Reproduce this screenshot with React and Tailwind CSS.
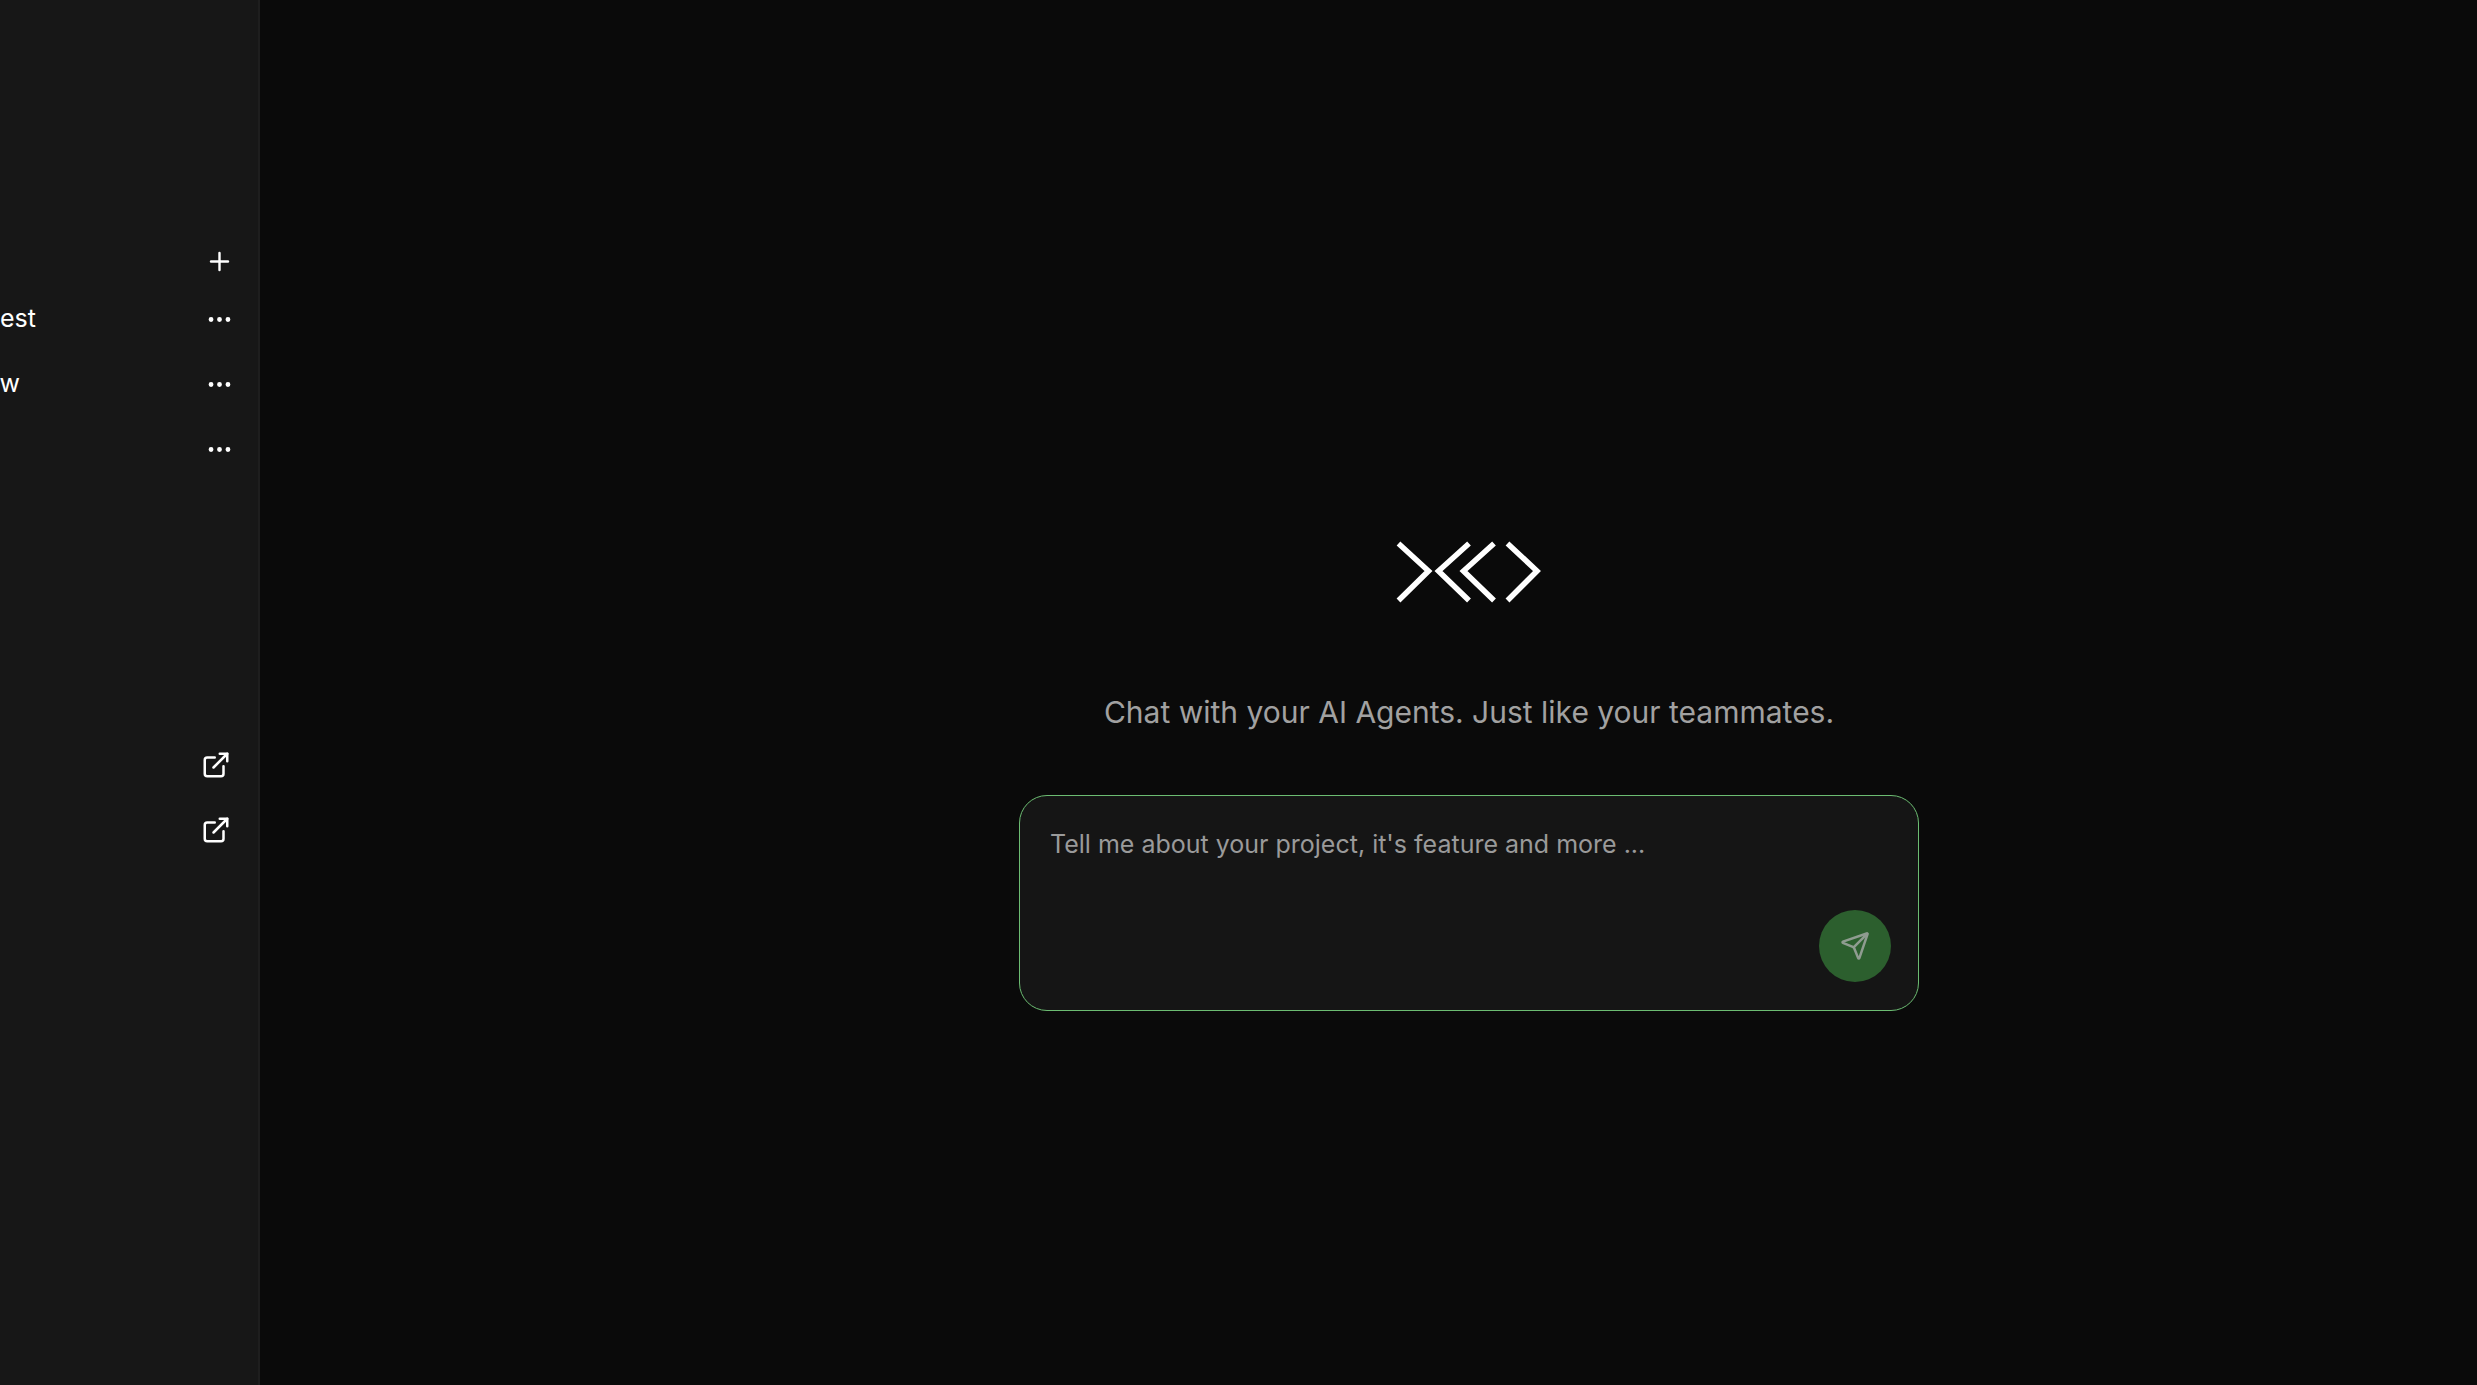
import { Plus, Ellipsis, ExternalLink, Send } from 'lucide-react';

const projects = [
  { name: 'est', width: 'w-9' },
  { name: 'w', width: 'w-5' },
  { name: '', width: 'w-5' },
];

const links = ['Documentation', 'Support'];

function Logo() {
  return (
    <svg className="w-[146px] h-16" viewBox="0 0 146 64" fill="none" stroke="#fff" strokeWidth="5.5" strokeMiterlimit="10">
      <path d="M2.5 4.5 32.5 32 2.5 61.5" />
      <path d="M73 4.5 42.5 32 73 61.5" />
      <path d="M98 4.5 67.5 32 98 61.5" />
      <path d="M111.5 4.5 141 32 111.5 61.5" />
    </svg>
  );
}

function Sidebar() {
  return (
    <aside className="w-[260px] shrink-0 flex flex-col pt-[235px] bg-[#171717] border-r-2 border-[#1e1e1e]">
      <div className="flex h-13 items-center justify-end pr-6">
        <button type="button" aria-label="New project">
          <Plus size={29} strokeWidth={2} />
        </button>
      </div>
      <ul className="flex flex-col gap-px">
        {projects.map((project, i) => (
          <li key={i} className="flex h-16 items-center justify-between pr-6">
            <span className={`flex justify-end whitespace-nowrap ${project.width}`}>{project.name}</span>
            <button type="button" aria-label="Project options">
              <Ellipsis size={29} strokeWidth={2} />
            </button>
          </li>
        ))}
      </ul>
      <nav className="mt-[252px] flex flex-col gap-px">
        {links.map((link) => (
          <a key={link} href="#" aria-label={link} className="flex h-16 items-center justify-end pr-[27px]">
            <ExternalLink size={30} />
          </a>
        ))}
      </nav>
    </aside>
  );
}

export default function App() {
  return (
    <div className="flex min-h-screen bg-[#0a0a0a] text-white text-[25px] font-['Inter',sans-serif]">
      <Sidebar />
      <main className="flex-1 flex flex-col items-center justify-center pt-[164px] pl-[201px]">
        <Logo />
        <h1 className="mt-[89px] text-[30px] leading-10 text-[#a1a1a1]">
          Chat with your AI Agents. Just like your teammates.
        </h1>
        <form className="mt-[63px] w-full max-w-[900px] flex flex-col rounded-[28px] border border-[#6cbc72] bg-[#151515] p-7 pr-[27px]">
          <textarea
            aria-label="Project description"
            rows={2}
            placeholder="Tell me about your project, it's feature and more ..."
            className="w-full h-[86px] px-0.5 resize-none bg-transparent outline-none leading-10 placeholder:text-[#9a9a9a]"
          />
          <button
            type="button"
            aria-label="Send"
            className="self-end flex size-[72px] items-center justify-center rounded-full bg-[#2c5f2e] text-[#8f9c90]"
          >
            <Send size={30} />
          </button>
        </form>
      </main>
    </div>
  );
}
